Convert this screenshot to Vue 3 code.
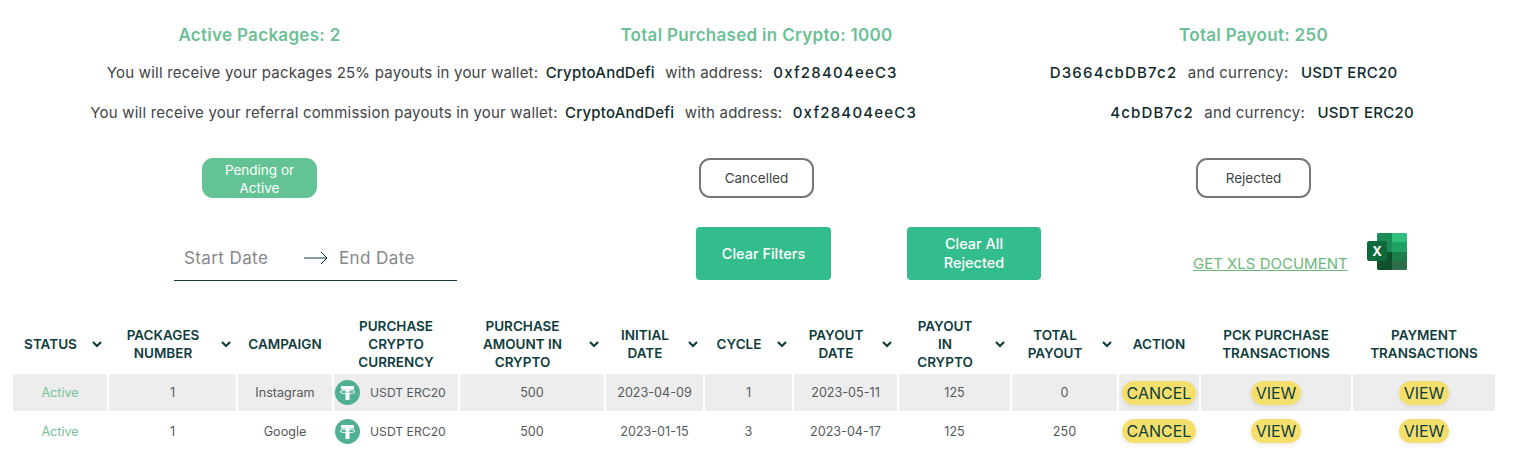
<script setup>
const rows = [
  { status: 'Active', packages: 1, campaign: 'Instagram', currency: 'USDT ERC20', amount: 500, initial: '2023-04-09', cycle: 1, payoutDate: '2023-05-11', payout: 125, total: 0 },
  { status: 'Active', packages: 1, campaign: 'Google', currency: 'USDT ERC20', amount: 500, initial: '2023-01-15', cycle: 3, payoutDate: '2023-04-17', payout: 125, total: 250 }
]

const columns = [
  { label: 'STATUS', width: 94, sort: true },
  { label: 'PACKAGES NUMBER', width: 127, sort: true },
  { label: 'CAMPAIGN', width: 94 },
  { label: 'PURCHASE CRYPTO CURRENCY', width: 124 },
  { label: 'PURCHASE AMOUNT IN CRYPTO', width: 144, sort: true },
  { label: 'INITIAL DATE', width: 97, sort: true },
  { label: 'CYCLE', width: 87, sort: true },
  { label: 'PAYOUT DATE', width: 103, sort: true },
  { label: 'PAYOUT\nIN\nCRYPTO', width: 111, sort: true },
  { label: 'TOTAL PAYOUT', width: 105, sort: true },
  { label: 'ACTION', width: 80 },
  { label: 'PCK PURCHASE TRANSACTIONS', width: 150 },
  { label: 'PAYMENT TRANSACTIONS', width: 142 }
]
</script>

<template>
  <div class="page">
    <div class="totals">
      <h3>Active Packages: 2</h3>
      <h3>Total Purchased in Crypto: 1000</h3>
      <h3>Total Payout: 250</h3>
    </div>

    <p class="wallet-line first">
      You will receive your packages 25% payouts in your wallet:
      <b class="wallet-name">CryptoAndDefi</b> with address:
      <b class="address">0xf28404eeC3<span class="redacted r1"></span>D3664cbDB7c2</b>
      and currency: <b class="currency-name">USDT ERC20</b>
    </p>
    <p class="wallet-line">
      You will receive your referral commission payouts in your wallet:
      <b class="wallet-name">CryptoAndDefi</b> with address:
      <b class="address">0xf28404eeC3<span class="redacted r2"></span>4cbDB7c2</b>
      and currency: <b class="currency-name">USDT ERC20</b>
    </p>

    <div class="filters">
      <div class="filter-cell"><button class="status-btn active">Pending or Active</button></div>
      <div class="filter-cell"><button class="status-btn">Cancelled</button></div>
      <div class="filter-cell"><button class="status-btn">Rejected</button></div>
    </div>

    <div class="tools">
      <div class="date-range">
        <span class="date-start">Start Date</span>
        <svg class="date-arrow" width="24" height="14" viewBox="0 0 24 14" fill="none" stroke="#0f3d3e" stroke-width="1">
          <path d="M0 7h23M17 1l6 6-6 6" />
        </svg>
        <span>End Date</span>
      </div>
      <button class="action-btn clear-filters">Clear Filters</button>
      <button class="action-btn clear-rejected">Clear All Rejected</button>
      <a class="xls-link">GET XLS DOCUMENT</a>
      <svg class="xls-icon" width="40" height="37" viewBox="0 0 40 37">
        <rect x="10" width="30" height="37" rx="2" fill="#1a9e5f" />
        <path d="M25 0h13a2 2 0 0 1 2 2v7H25z" fill="#2fc07c" />
        <path d="M10 9h15v10H10z" fill="#1f8a55" />
        <path d="M25 9h15v10H25z" fill="#20a264" />
        <path d="M10 2a2 2 0 0 1 2-2h13v9H10z" fill="#1c8c57" />
        <path d="M10 19h15v18H12a2 2 0 0 1-2-2z" fill="#124f2f" />
        <path d="M25 19h15v9H25z" fill="#1c7e4d" />
        <path d="M25 28h15v7a2 2 0 0 1-2 2H25z" fill="#2b6e48" />
        <rect y="8" width="20" height="20" rx="2" fill="#0e6a3a" />
        <text x="10" y="23" class="xls-x">X</text>
      </svg>
    </div>

    <table class="packages">
      <colgroup>
        <col v-for="col in columns" :key="col.label" :style="{ width: col.width + 'px' }" />
      </colgroup>
      <thead>
        <tr>
          <th v-for="col in columns" :key="col.label">
            <div class="th-inner">
              <span class="th-label">{{ col.label }}</span>
              <svg v-if="col.sort" class="chevron" width="10" height="7" viewBox="0 0 10 7" fill="none" stroke="#0f3d3e" stroke-width="2.2">
                <path d="M1 1l4 4 4-4" />
              </svg>
            </div>
          </th>
        </tr>
      </thead>
      <tbody>
        <tr v-for="(row, i) in rows" :key="i">
          <td class="status">{{ row.status }}</td>
          <td>{{ row.packages }}</td>
          <td>{{ row.campaign }}</td>
          <td>
            <div class="currency">
              <svg width="25" height="25" viewBox="0 0 25 25">
                <circle cx="12.5" cy="12.5" r="12.5" fill="#50af95" />
                <path d="M6 6h13v3.500h-4.500v3h-4v-3H6z" fill="#fff" />
                <path d="M10.500 12.500h4V20h-4z" fill="#fff" />
                <ellipse cx="12.500" cy="12" rx="7.500" ry="1.800" fill="none" stroke="#fff" stroke-width="0.900" />
              </svg>
              <span>{{ row.currency }}</span>
            </div>
          </td>
          <td>{{ row.amount }}</td>
          <td>{{ row.initial }}</td>
          <td>{{ row.cycle }}</td>
          <td>{{ row.payoutDate }}</td>
          <td>{{ row.payout }}</td>
          <td>{{ row.total }}</td>
          <td><button class="pill">CANCEL</button></td>
          <td><button class="pill">VIEW</button></td>
          <td><button class="pill">VIEW</button></td>
        </tr>
      </tbody>
    </table>
  </div>
</template>

<style scoped>
.page {
  width: 1520px;
  height: 464px;
  overflow: hidden;
  font-family: 'Inter', sans-serif;
  color: #3f4446;
  background: #fff;
}

.totals {
  display: grid;
  grid-template-columns: repeat(3, 497px);
  padding: 24px 0 0 11px;
  text-align: center;
}

.totals h3 {
  margin: 0;
  font-size: 17px;
  line-height: 22px;
  font-weight: 600;
  letter-spacing: 0.3px;
  color: #6cc095;
}

.wallet-line {
  margin: 22px 0 0;
  padding-right: 20px;
  font-size: 15px;
  line-height: 18px;
  letter-spacing: 0.2px;
  text-align: center;
  white-space: pre-wrap;
}

.wallet-line.first {
  margin-top: 18px;
}

.wallet-line b {
  font-weight: 500;
  color: #0f2b2c;
}

.wallet-name {
  margin: 0 6px 0 3px;
}

.address {
  margin: 0 6px;
  letter-spacing: 1.2px;
}

.currency-name {
  margin-left: 8px;
  letter-spacing: 0.3px;
}

.redacted {
  display: inline-block;
}

.r1 { width: 152px; }
.r2 { width: 193px; }

.filters {
  display: grid;
  grid-template-columns: repeat(3, 497px);
  margin-top: 36px;
  padding-left: 11px;
}

.filter-cell {
  display: flex;
  justify-content: center;
}

.status-btn {
  width: 115px;
  height: 40px;
  padding: 0 12px;
  border: 2px solid #777;
  border-radius: 11px;
  background: #fff;
  color: #3f4446;
  font-family: inherit;
  font-size: 13.5px;
  line-height: 19px;
}

.status-btn.active {
  padding-top: 1px;
  line-height: 18px;
  background: #63c394;
  border-color: #63c394;
  color: #fff;
}

.tools {
  display: flex;
  align-items: flex-start;
  margin-top: 29px;
  padding-left: 174px;
}

.date-range {
  display: flex;
  align-items: center;
  width: 283px;
  height: 54px;
  padding: 8px 0 0 10px;
  box-sizing: border-box;
  border-bottom: 1px solid #0f3d3e;
  font-size: 17px;
  letter-spacing: 0.4px;
  color: #85888a;
}

.date-start {
  width: 120px;
}

.date-arrow {
  margin-right: 11px;
}

.action-btn {
  width: 135px;
  height: 53px;
  border: 0;
  border-radius: 4px;
  background: #34bd8c;
  color: #fff;
  font-family: inherit;
  font-size: 14.5px;
  font-weight: 500;
  line-height: 19px;
  padding: 0 20px;
}

.clear-filters {
  margin-left: 239px;
}

.clear-rejected {
  width: 134px;
  margin-left: 76px;
  padding-bottom: 2px;
}

.xls-link {
  margin: 28px 0 0 152px;
  font-size: 15px;
  line-height: 18px;
  color: #6cb87a;
  text-decoration: underline;
}

.xls-icon {
  margin: 6px 0 0 19px;
}

.xls-x {
  font-family: 'Inter', sans-serif;
  font-size: 13px;
  font-weight: 700;
  fill: #fff;
  text-anchor: middle;
}

.packages {
  table-layout: fixed;
  width: 1486px;
  margin: 34px 0 0 11px;
  border-collapse: separate;
  border-spacing: 2px 0;
}

.packages th {
  height: 58px;
  padding: 0 0 1px;
  font-size: 13.5px;
  line-height: 18px;
  font-weight: 600;
  color: #0f3d3e;
}

.th-inner {
  display: flex;
  align-items: center;
  justify-content: center;
  gap: 4px;
}

.th-label {
  flex: 1;
  white-space: pre-line;
}

.chevron {
  flex: none;
  margin-right: 5px;
}

.packages td {
  height: 37px;
  padding: 0;
  font-size: 12.6px;
  text-align: center;
  color: #55595b;
}

.packages tbody tr:nth-child(1) td {
  background: #ededed;
}

.packages tbody tr:nth-child(2) td {
  height: 40px;
}

.packages td.status {
  color: #73c396;
}

.currency {
  display: flex;
  align-items: center;
  gap: 10px;
  padding-left: 1px;
  font-size: 12.2px;
}

.pill {
  height: 24px;
  padding: 0 5px;
  border: 0;
  border-radius: 12px;
  background: #f4df6d;
  color: #0f3d3e;
  font-family: inherit;
  font-size: 16px;
  box-shadow: 0 2px 5px rgba(0, 0, 0, 0.08);
}
</style>
